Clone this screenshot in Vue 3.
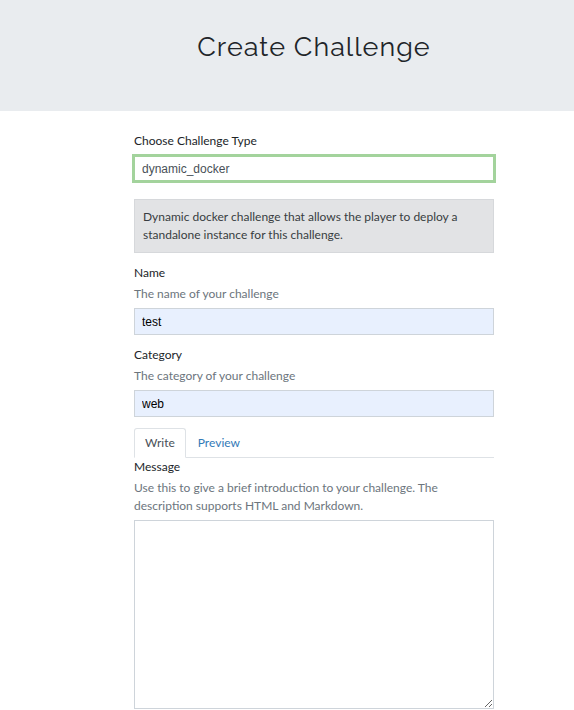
<script setup>
import { ref } from 'vue'

const type = ref('dynamic_docker')
const name = ref('test')
const category = ref('web')
const message = ref('')
const tab = ref('write')
</script>

<template>
  <header class="banner">
    <h1>Create Challenge</h1>
  </header>
  <main class="container">
    <form @submit.prevent>
      <div class="field type-field">
        <label for="type">Choose Challenge Type</label>
        <select id="type" v-model="type" class="control select">
          <option>dynamic_docker</option>
        </select>
      </div>
      <p class="notice">Dynamic docker challenge that allows the player to deploy a standalone instance for this challenge.</p>
      <div class="field">
        <label for="name">Name</label>
        <small id="name-help">The name of your challenge</small>
        <input id="name" v-model="name" class="control filled" type="text" aria-describedby="name-help" />
      </div>
      <div class="field">
        <label for="category">Category</label>
        <small id="category-help">The category of your challenge</small>
        <input id="category" v-model="category" class="control filled" type="text" aria-describedby="category-help" />
      </div>
      <div class="tabs" role="tablist">
        <button type="button" role="tab" :aria-selected="tab === 'write'" :class="{ active: tab === 'write' }" @click="tab = 'write'">Write</button>
        <button type="button" role="tab" :aria-selected="tab === 'preview'" :class="{ active: tab === 'preview' }" @click="tab = 'preview'">Preview</button>
      </div>
      <div class="message">
        <label for="message">Message</label>
        <small id="message-help">Use this to give a brief introduction to your challenge. The description supports HTML and Markdown.</small>
        <textarea id="message" v-model="message" rows="10" aria-describedby="message-help"></textarea>
      </div>
    </form>
  </main>
</template>

<style>
body {
  background: #fff;
  overflow-x: hidden;
}
</style>

<style scoped>
* {
  box-sizing: border-box;
}
.banner {
  padding: 31px 0 49px 54px;
  background: #e9ecef;
  text-align: center;
}
h1 {
  margin: 0;
  color: #212529;
  font: 400 27px/31px Raleway, Lato, sans-serif;
  letter-spacing: 1px;
}
.container {
  padding: 21px 80px 0 134px;
  color: #212529;
  font: 400 12px/18px Lato, sans-serif;
}
label,
small {
  display: block;
  font-size: 12px;
  line-height: 18px;
}
label {
  margin-bottom: 3px;
}
small {
  margin-bottom: 5px;
  color: #6c757d;
}
.field {
  margin-bottom: 11px;
}
.type-field {
  display: grid;
  gap: 3px;
  margin-bottom: 18px;
}
.control {
  display: block;
  width: 100%;
  height: 27px;
  padding: 0 7px;
  border: 1px solid #ced4da;
  border-radius: 0;
  outline: 0;
  font: 400 12px/18px "Liberation Sans", Arial, sans-serif;
}
.select {
  height: 25px;
  appearance: none;
  background: #fff;
  border-color: #a3d39c;
  box-shadow: 0 0 0 2px #a3d39c;
  color: #495057;
}
.filled {
  background: #e8f0fe;
  color: #000;
}
.notice {
  margin: 0 0 11px;
  padding: 8px;
  border: 1px solid #d6d8db;
  background: #e2e3e5;
  color: #383d41;
}
.tabs {
  display: flex;
  gap: 1px;
  border-bottom: 1px solid #dee2e6;
}
.tabs button {
  height: 30px;
  margin-bottom: -1px;
  padding: 0 10px;
  border: 1px solid transparent;
  border-radius: 3px 3px 0 0;
  background: none;
  color: #337ab7;
  font: inherit;
}
.tabs .active {
  border-color: #dee2e6 #dee2e6 #fff;
  background: #fff;
  color: #495057;
}
textarea {
  display: block;
  width: 100%;
  height: 189px;
  padding: 5px 8px;
  border: 1px solid #ced4da;
  border-radius: 0;
  outline: 0;
  resize: vertical;
  font: 400 12px/18px "Liberation Sans", Arial, sans-serif;
}
</style>
